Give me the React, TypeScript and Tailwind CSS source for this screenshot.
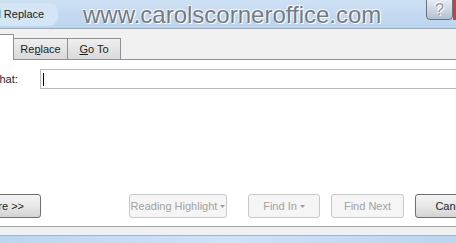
import React from "react";

interface ButtonProps {
  label: string;
  width: string;
  disabled?: boolean;
  dropdown?: boolean;
  className?: string;
}

const DropArrow = () => (
  <svg width="5" height="3" viewBox="0 0 5 3" className="ml-[3px] mt-px">
    <path d="M0 0h5L2.5 3z" fill="#9c9c9c" />
  </svg>
);

const DialogButton = ({ label, width, disabled, dropdown, className }: ButtonProps) => {
  const look = disabled
    ? "border-[#c9c9c9] bg-[#f5f5f5] text-[#a2a2a2]"
    : "border-[#707070] bg-linear-to-b from-[#f4f4f4] via-[#e8e8e8] to-[#d3d3d3] text-[#1e1e1e]";
  return (
    <div
      className={`flex h-[24px] shrink-0 items-center justify-center rounded-[3px] border ${look} ${width} ${className ?? ""}`}
    >
      <span className="whitespace-nowrap">{label}</span>
      {dropdown && <DropArrow />}
    </div>
  );
};

const App = () => {
  return (
    <div className="flex h-[243px] w-[456px] flex-col overflow-hidden bg-white font-['Liberation_Sans',Arial,sans-serif] text-[11px] text-[#1e1e1e]">
      {/* title bar */}
      <div className="flex h-[29px] shrink-0 items-start border-b border-[#98abc0] bg-linear-to-b from-[#cde0f4] to-[#bcd4ee]">
        <div className="mt-[3px] flex h-[23px] w-[58px] shrink-0 items-center overflow-hidden rounded-r-[9px] bg-[#d4e5f6]">
          <span className="-ml-[42px] whitespace-nowrap text-[11px] text-[#1b1b1b]">Find and Replace</span>
        </div>
        <span className="ml-[25px] mt-[1px] whitespace-nowrap text-[24px] leading-[28px] text-[#737a84] [text-shadow:1px_1px_0_#ffffff,-1px_-1px_0_rgba(255,255,255,0.75),1px_-1px_0_rgba(255,255,255,0.5)]">
          www.carolscorneroffice.com
        </span>
        <div className="ml-auto -mt-[2px] flex h-[22px] w-[27px] shrink-0 items-center justify-center rounded-b-[4px] border border-[#66727f] bg-linear-to-b from-[#e9eef3] to-[#b3c2d1]">
          <span className="mt-[2px] text-[16px] leading-none text-[#8a96a2] [text-shadow:1px_1px_0_#ffffff,-1px_-1px_0_#ffffff]">?</span>
        </div>
        <div className="h-[20px] w-[3px] shrink-0 bg-[#c9442e]" />
      </div>

      {/* tab strip */}
      <div className="flex h-[31px] shrink-0 items-end border-b border-[#8e9197] bg-[#f0f0f0]">
        <div className="-mb-px h-[26px] w-[14px] shrink-0 border-r border-t border-[#8e9197] bg-white" />
        <div className="flex h-[21px] w-[54px] shrink-0 items-center justify-center border-r border-t border-[#8e9197] bg-linear-to-b from-[#efefef] to-[#d9d9d9]">
          <span>
            Re<span className="underline">p</span>lace
          </span>
        </div>
        <div className="flex h-[21px] w-[53px] shrink-0 items-center justify-center border-r border-t border-[#8e9197] bg-linear-to-b from-[#efefef] to-[#d9d9d9]">
          <span>
            <span className="underline">G</span>o To
          </span>
        </div>
      </div>

      {/* panel */}
      <div className="flex h-[166px] shrink-0 flex-col pt-[9px]">
        <div className="flex h-[20px] items-center">
          <div className="w-[40px] shrink-0">
            <span className="-ml-[33px] block whitespace-nowrap">Find what:</span>
          </div>
          <div className="flex h-[20px] w-[430px] shrink-0 items-center border border-[#bababa] bg-white pl-[2px]">
            <div className="h-[13px] w-px bg-black" />
          </div>
        </div>

        <div className="mb-[8px] mt-auto flex items-center">
          <DialogButton label="More >>" width="w-[75px]" className="-ml-[34px]" />
          <DialogButton label="Reading Highlight" width="w-[98px]" className="ml-[88px]" disabled dropdown />
          <DialogButton label="Find In" width="w-[72px]" className="ml-[21px]" disabled dropdown />
          <DialogButton label="Find Next" width="w-[73px]" className="ml-[11px]" disabled />
          <DialogButton label="Cancel" width="w-[75px]" className="ml-[11px]" />
        </div>
      </div>

      {/* bottom edge */}
      <div className="h-[9px] shrink-0 border-t border-[#a3a3a3] bg-[#f0f0f0]" />
      <div className="flex-1 border-t border-[#9fb6cf] bg-linear-to-r from-[#bcd5ef] via-[#cfe2f6] to-[#bcd4ee]" />
    </div>
  );
};

export default App;
